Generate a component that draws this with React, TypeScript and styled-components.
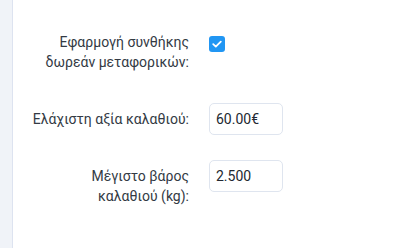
import styled, { createGlobalStyle } from 'styled-components'

const GlobalStyle = createGlobalStyle`
  html, body {
    margin: 0;
    padding: 0;
    background: #ffffff;
  }
  body {
    font-family: Roboto, "Noto Sans", Arial, sans-serif;
  }
`

const Layout = styled.div`
  display: flex;
  min-height: 248px;
`

const Sidebar = styled.div`
  width: 12px;
  flex-shrink: 0;
  background-color: #f0f3f8;
  border-right: 1px solid #dde3f0;
`

const Panel = styled.div`
  flex: 1;
  padding: 26px 0 0 0;
  display: flex;
  flex-direction: column;
  gap: 25px;
`

const Row = styled.div`
  display: grid;
  grid-template-columns: 176px auto;
  column-gap: 20px;
  align-items: start;
`

const Label = styled.label`
  text-align: right;
  font-size: 14px;
  line-height: 20px;
  color: #333a44;
  padding: 6px 0;
`

const Control = styled.div<{ $top?: number }>`
  display: flex;
  padding-top: ${(p) => p.$top ?? 0}px;
`

const CheckBox = styled.span`
  width: 16px;
  height: 16px;
  border-radius: 3px;
  background-color: #2196f3;
  display: flex;
  align-items: center;
  justify-content: center;
`

const Input = styled.input`
  width: 74px;
  height: 32px;
  box-sizing: border-box;
  border: 1px solid #dfe5ef;
  border-radius: 5px;
  padding: 0 6px;
  font-family: Roboto, "Noto Sans", Arial, sans-serif;
  font-size: 14px;
  color: #222831;
  background: #fff;
  outline: none;
`

export default function App() {
  return (
    <>
      <GlobalStyle />
      <Layout>
        <Sidebar />
        <Panel>
          <Row>
            <Label>
              Εφαρμογή συνθήκης
              <br />
              δωρεάν μεταφορικών:
            </Label>
            <Control $top={10}>
              <CheckBox>
                <svg width="12" height="12" viewBox="0 0 12 12">
                  <path
                    d="M2.2 6.2 L4.8 8.6 L9.8 3.6"
                    fill="none"
                    stroke="#fff"
                    strokeWidth="1.8"
                    strokeLinecap="round"
                    strokeLinejoin="round"
                  />
                </svg>
              </CheckBox>
            </Control>
          </Row>
          <Row>
            <Label>Ελάχιστη αξία καλαθιού:</Label>
            <Control>
              <Input defaultValue="60.00€" />
            </Control>
          </Row>
          <Row>
            <Label>
              Μέγιστο βάρος
              <br />
              καλαθιού (kg):
            </Label>
            <Control>
              <Input defaultValue="2.500" />
            </Control>
          </Row>
        </Panel>
      </Layout>
    </>
  )
}
